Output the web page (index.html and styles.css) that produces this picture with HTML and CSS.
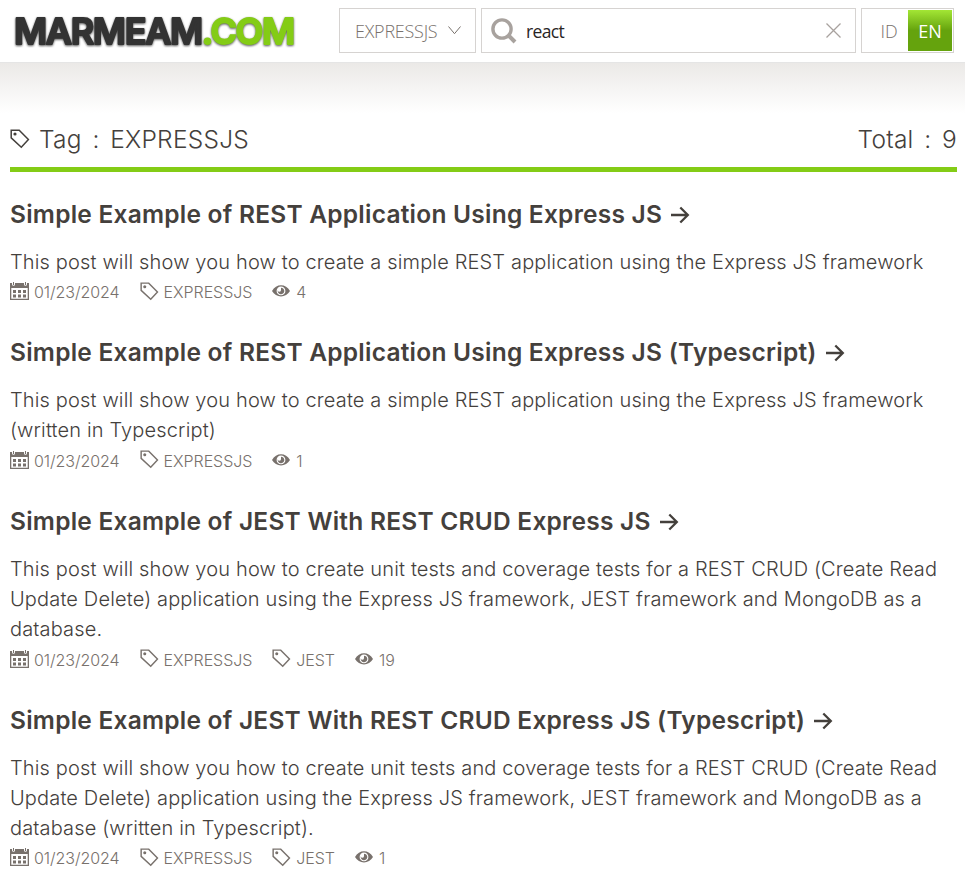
FILE: index.html
```
<!DOCTYPE html>
<html lang="en">
<head>
<meta charset="utf-8">
<title>Tag : EXPRESSJS</title>
<link rel="stylesheet" href="styles.css">
</head>
<body>
<svg class="symbols" aria-hidden="true">
  <symbol id="tag" viewBox="0 0 20 20"><path d="M1.2 1.2h8L18.4 10.5 11.3 18.2 1.2 8.8z" fill="none" stroke="currentColor" stroke-width="1.5"/><circle cx="5" cy="5" r="1.6" fill="currentColor"/></symbol>
  <symbol id="calendar" viewBox="0 0 19 18"><path fill="currentColor" fill-rule="evenodd" d="M0 1h2v1.2a1.5 1.5 0 0 0 3 0V1h9v1.2a1.5 1.5 0 0 0 3 0V1h2v17H0zM1.3 6v10.7h16.4V6z"/><path fill="currentColor" d="M3 0h1v3H3zM15 0h1v3h-1zM3 8h3v3H3zM8 8h3v3H8zM13 8h3v3h-3zM3 12.5h3v3H3zM8 12.5h3v3H8zM13 12.5h3v3h-3z"/></symbol>
  <symbol id="eye" viewBox="0 0 18 12"><path fill="currentColor" fill-rule="evenodd" d="M0 6C4-1.7 14-1.7 18 6 14 13.2 4 13.2 0 6zM9 1.5a4.4 4.4 0 1 0 0 8.800 4.4 4.4 0 0 0 0-8.800z"/><path d="M9 2.7a3.3 3.3 0 1 1-3.2 2.5A1.5 1.5 0 0 0 9 5z" fill="currentColor"/></symbol>
  <symbol id="arrow" viewBox="0 0 20 18"><path d="M1 9h17M10.3 1.5 17.8 9l-7.5 7.5" fill="none" stroke="currentColor" stroke-width="2.3"/></symbol>
</svg>
<header class="topbar">
  <a class="logo"><svg width="320" height="62" viewBox="0 0 320 62"><text x="14" y="44">MARMEAM<tspan class="logo-tld">.COM</tspan></text></svg></a>
  <div class="select">EXPRESSJS<svg width="13" height="9" viewBox="0 0 13 9"><path d="M.5.5 6.5 7.7 12.5.5"/></svg></div>
  <div class="search">
    <svg class="glass" width="26" height="26" viewBox="0 0 26 26"><circle cx="11" cy="11" r="9.1"/><path d="m17.5 17.5 6.5 6.5" stroke-width="4"/></svg>
    <span class="query">react</span>
    <svg class="clear" width="15" height="15" viewBox="0 0 15 15"><path d="m.5.5 14 14M14.5.5l-14 14"/></svg>
  </div>
  <div class="lang"><span>ID</span><span class="active">EN</span></div>
</header>
<main>
  <div class="heading"><h1><svg><use href="#tag"/></svg>Tag : EXPRESSJS</h1><span>Total : 9</span></div>
  <article>
    <h2>Simple Example of REST Application Using Express JS<svg><use href="#arrow"/></svg></h2>
    <p>This post will show you how to create a simple REST application using the Express JS framework</p>
    <div class="meta"><span><svg class="calendar"><use href="#calendar"/></svg>01/23/2024</span><span><svg class="tag"><use href="#tag"/></svg>EXPRESSJS</span><span><svg class="eye"><use href="#eye"/></svg>4</span></div>
  </article>
  <article>
    <h2>Simple Example of REST Application Using Express JS (Typescript)<svg><use href="#arrow"/></svg></h2>
    <p>This post will show you how to create a simple REST application using the Express JS framework (written in Typescript)</p>
    <div class="meta"><span><svg class="calendar"><use href="#calendar"/></svg>01/23/2024</span><span><svg class="tag"><use href="#tag"/></svg>EXPRESSJS</span><span><svg class="eye"><use href="#eye"/></svg>1</span></div>
  </article>
  <article>
    <h2>Simple Example of JEST With REST CRUD Express JS<svg><use href="#arrow"/></svg></h2>
    <p>This post will show you how to create unit tests and coverage tests for a REST CRUD (Create Read Update Delete) application using the Express JS framework, JEST framework and MongoDB as a database.</p>
    <div class="meta"><span><svg class="calendar"><use href="#calendar"/></svg>01/23/2024</span><span><svg class="tag"><use href="#tag"/></svg>EXPRESSJS</span><span><svg class="tag"><use href="#tag"/></svg>JEST</span><span><svg class="eye"><use href="#eye"/></svg>19</span></div>
  </article>
  <article>
    <h2>Simple Example of JEST With REST CRUD Express JS (Typescript)<svg><use href="#arrow"/></svg></h2>
    <p>This post will show you how to create unit tests and coverage tests for a REST CRUD (Create Read Update Delete) application using the Express JS framework, JEST framework and MongoDB as a database (written in Typescript).</p>
    <div class="meta"><span><svg class="calendar"><use href="#calendar"/></svg>01/23/2024</span><span><svg class="tag"><use href="#tag"/></svg>EXPRESSJS</span><span><svg class="tag"><use href="#tag"/></svg>JEST</span><span><svg class="eye"><use href="#eye"/></svg>1</span></div>
  </article>
</main>
</body>
</html>
```
FILE: styles.css
```
* { box-sizing: border-box; }
body { margin: 0; height: 888px; overflow: hidden; background: #fff; color: #44403c; font-family: Inter, sans-serif; font-weight: 300; }
.symbols { display: none; }
.topbar { display: flex; height: 63px; padding: 8px 11px 0 0; border-bottom: 1px solid #e5e5e5; font-family: "Open Sans", "Noto Sans", sans-serif; font-size: 18px; color: #78716c; }
.logo { width: 339px; height: 54px; margin-top: -8px; flex: none; }
.logo text { font: 600 36px Inter, sans-serif; letter-spacing: -1.35px; fill: #333; stroke: #333; stroke-width: 2; stroke-linejoin: round; filter: drop-shadow(0 1px 1px #555); }
.logo .logo-tld { fill: #84cc16; stroke: #84cc16; }
.select, .search, .lang { height: 45px; border: 1px solid #d6d3d1; display: flex; align-items: center; }
.select { width: 137px; margin-right: 5px; padding-left: 15px; letter-spacing: -.25px; }
.select svg { margin-left: 11px; fill: none; stroke: #78716c; }
.search { width: 375px; margin-right: 5px; padding: 0 14px 0 9px; }
.glass { fill: none; stroke: #a8a29e; stroke-width: 3.4; }
.query { flex: 1; margin-left: 9px; color: #292524; font-weight: 400; font-size: 17.5px; letter-spacing: -.65px; }
.clear { stroke: #a8a29e; stroke-width: 1.3; }
.lang { width: 93px; padding: 1px; }
.lang span { width: 44px; height: 41px; line-height: 43px; padding-left: 8px; text-align: center; }
.lang .active { padding: 0; margin-left: 1px; background: linear-gradient(#a3e635, #65a30d 50%); color: #fff; font-weight: 400; }
main { padding: 51px 8px 0 10px; background: linear-gradient(#ebe9e7, #fff 50px); }
.heading { height: 58px; display: flex; justify-content: space-between; border-bottom: 5px solid #84cc16; font-size: 24.5px; line-height: 51px; letter-spacing: .25px; word-spacing: 3.5px; }
h1 { margin: 0; font: inherit; display: flex; align-items: center; height: 51px; }
h1 svg { width: 20px; height: 20px; margin: -1px 9px 0 0; }
article { padding-top: 22px; margin-bottom: 9.1px; }
h2 { margin: 0 0 12.8px; font-size: 24.5px; line-height: 40px; font-weight: 600; letter-spacing: .24px; white-space: nowrap; }
h2 svg { width: 20px; height: 18px; margin-left: 8px; vertical-align: -1px; }
p { margin: 0; font-size: 20px; line-height: 30.1px; letter-spacing: .15px; }
.meta { display: flex; gap: 20px; height: 18px; margin-top: 6.5px; align-items: center; font-size: 16px; line-height: 18px; color: #78716c; }
.meta span { display: flex; align-items: center; letter-spacing: -.06px; }
.meta svg { position: relative; top: -1px; }
.calendar { width: 19px; height: 18px; margin-right: 5px; }
.tag { width: 19px; height: 19px; margin-right: 5px; }
.eye { width: 18px; height: 12px; margin-right: 6px; }
```
